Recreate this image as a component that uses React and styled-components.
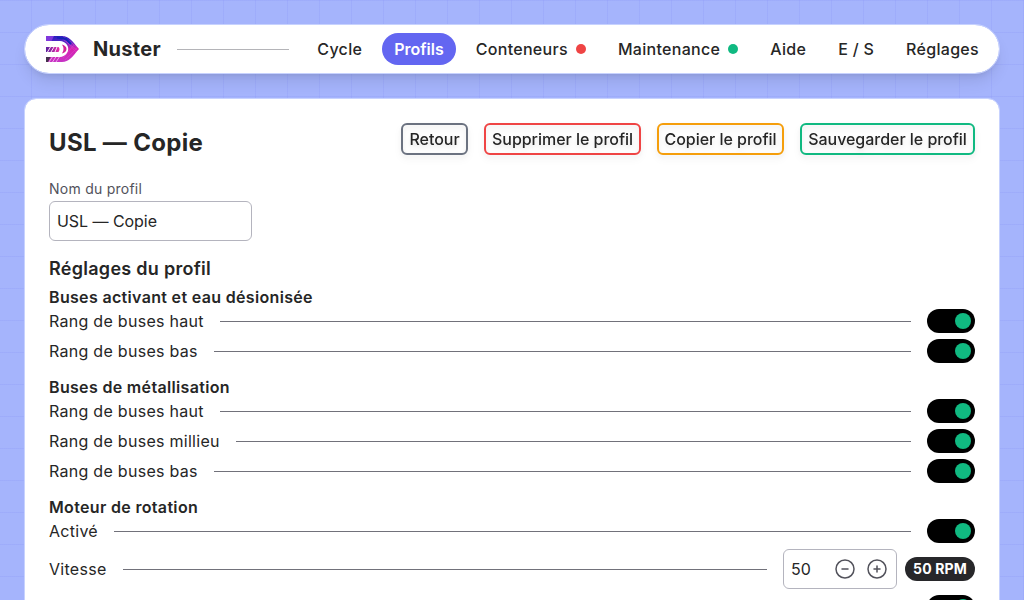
import React from "react";
import styled, { createGlobalStyle } from "styled-components";

const Global = createGlobalStyle`
  *, *::before, *::after { box-sizing: border-box; }
  body { margin: 0; font-family: Inter, "Liberation Sans", sans-serif; color: #262626; font-size: 16px; line-height: 24px; }
  h1, h2, h3, p { margin: 0; }
  button, input { font: inherit; color: inherit; letter-spacing: inherit; }
`;

const Page = styled.div`
  height: 600px;
  overflow: hidden;
  padding: 24px;
  display: flex;
  flex-direction: column;
  gap: 24px;
  background-color: #a5b4fc;
  background-image:
    linear-gradient(to right, transparent 31px, rgba(99, 102, 241, 0.1) 31px),
    linear-gradient(to bottom, rgba(99, 102, 241, 0.1) 1px, transparent 1px);
  background-size: 32px 32px;
`;

const Header = styled.header`
  flex: none;
  height: 50px;
  display: flex;
  align-items: center;
  padding: 0 8px 0 21px;
  background: #fff;
  background-clip: padding-box;
  border: 1px solid #c7d2fe;
  border-radius: 25px;
  box-shadow: 0 10px 15px -3px rgba(0, 0, 0, 0.1), 0 4px 6px -4px rgba(0, 0, 0, 0.1);
`;

const Brand = styled.span`
  margin-left: 13px;
  font-size: 20px;
  line-height: 28px;
  font-weight: 700;
  letter-spacing: 0.3px;
`;

const HeaderRule = styled.div`
  flex: 1;
  height: 1px;
  margin: 0 16px;
  background: #b4b4b8;
`;

const Nav = styled.nav`
  display: flex;
  gap: 8px;
`;

const NavItem = styled.a`
  display: flex;
  align-items: center;
  gap: 8px;
  height: 32px;
  padding: 0 12px;
  border-radius: 16px;
  font-weight: ${(p) => (p.$active ? 600 : 500)};
  letter-spacing: ${(p) => (p.$active ? "0" : "0.3px")};
  color: ${(p) => (p.$active ? "#fff" : "#262626")};
  background: ${(p) => (p.$active ? "#6366f1" : "transparent")};
`;

const Dot = styled.i`
  width: 10px;
  height: 10px;
  border-radius: 50%;
  background: ${(p) => p.$color};
`;

const Card = styled.main`
  flex: none;
  padding: 24px;
  background: #fff;
  background-clip: padding-box;
  border: 1px solid #c7d2fe;
  border-radius: 12px;
`;

const TitleBar = styled.div`
  display: flex;
  justify-content: space-between;
  align-items: flex-start;
`;

const Title = styled.h1`
  margin-top: 4px;
  font-size: 24px;
  line-height: 32px;
  font-weight: 700;
  letter-spacing: 0.32px;
`;

const Actions = styled.div`
  display: flex;
  gap: 16px;
`;

const Action = styled.button`
  width: ${(p) => p.$width}px;
  height: 32px;
  padding: 0;
  white-space: nowrap;
  border: 2px solid ${(p) => p.$color};
  border-radius: 6px;
  background: transparent;
  font-weight: 500;
  line-height: 24px;
  letter-spacing: -0.03px;
  filter: drop-shadow(0 4px 3px rgba(0, 0, 0, 0.07)) drop-shadow(0 2px 2px rgba(0, 0, 0, 0.06));
`;

const FieldLabel = styled.label`
  display: block;
  margin-top: 20px;
  font-size: 14px;
  line-height: 20px;
  letter-spacing: 0.25px;
  color: #52525b;
`;

const TextInput = styled.input`
  display: block;
  width: 203px;
  height: 40px;
  margin-top: 2px;
  padding: 0 7px;
  border: 1px solid #b4b4be;
  border-radius: 6px;
  background: #fff;
  letter-spacing: -0.05px;
`;

const SectionTitle = styled.h2`
  margin-top: 14px;
  font-size: 18px;
  line-height: 28px;
  font-weight: 600;
  letter-spacing: 0.28px;
`;

const Groups = styled.div`
  margin-top: 2px;
  display: flex;
  flex-direction: column;
  gap: 12px;
`;

const GroupTitle = styled.h3`
  font-size: 16px;
  line-height: 24px;
  font-weight: 600;
  letter-spacing: 0.33px;
`;

const Rows = styled.div`
  display: flex;
  flex-direction: column;
  gap: 6px;
`;

const Row = styled.div`
  display: flex;
  align-items: center;
  gap: 16px;
  min-height: 24px;
`;

const RowLabel = styled.span`
  letter-spacing: 0.28px;
`;

const Rule = styled.div`
  flex: 1;
  height: 1px;
  background: #71717a;
`;

const Toggle = styled.button`
  display: flex;
  justify-content: flex-end;
  width: 48px;
  height: 24px;
  padding: 4px;
  border: 0;
  border-radius: 12px;
  background: #000;
`;

const Knob = styled.span`
  width: 16px;
  height: 16px;
  border-radius: 50%;
  background: #10b981;
`;

const Controls = styled.div`
  display: flex;
  align-items: center;
  gap: 8px;
`;

const Stepper = styled.div`
  display: flex;
  align-items: center;
  width: 114px;
  height: 40px;
  padding: 0 7px;
  border: 1px solid #b4b4be;
  border-radius: 6px;
`;

const StepValue = styled.span`
  flex: 1;
`;

const StepIcons = styled.div`
  display: flex;
  gap: 8px;
`;

const Badge = styled.span`
  width: 70px;
  height: 24px;
  text-align: center;
  border-radius: 12px;
  background: #27272a;
  color: #fff;
  font-size: 14px;
  font-weight: 700;
  letter-spacing: 0.15px;
`;

const Logo = () => (
  <svg width="34" height="27" viewBox="0 0 34 27">
    <defs>
      <linearGradient id="body" x1="0.4" y1="0" x2="0.5" y2="1">
        <stop offset="0" stopColor="#2a1fc0" />
        <stop offset="0.28" stopColor="#6428c8" />
        <stop offset="0.5" stopColor="#d81fae" />
        <stop offset="1" stopColor="#c436c8" />
      </linearGradient>
      <linearGradient id="stub" x1="0" y1="0" x2="1" y2="0">
        <stop offset="0" stopColor="#5a22a0" />
        <stop offset="1" stopColor="#f02aa8" />
      </linearGradient>
      <clipPath id="shape">
        <path d="M0 0H16C23 0 26 5 33 13C26 21 23 26 16 26H0V21H14C25 20 25 6 14 5H0Z" />
      </clipPath>
    </defs>
    <g clipPath="url(#shape)">
      <rect width="34" height="27" fill="url(#body)" />
      <path d="M0 0H8L5 6H0Z" fill="#8038dc" />
      <path d="M0 20H5L2 26H0Z" fill="#45304d" />
      <path d="M3 26L7 20M6.5 26L10.5 20M10 26L14 20" stroke="#f2c4f4" strokeWidth="0.8" />
      <path d="M14 1L31 14M17 0L32 12M20 5L30 16M19 24L31 12M17 22L28 9" stroke="#e24bd2" strokeWidth="0.6" opacity="0.75" />
      <path d="M11 1.5L20 3L25 8" stroke="#1724b8" strokeWidth="2" fill="none" />
    </g>
    <path d="M0 11H12.5Q14.5 13 12.5 16H0Z" fill="url(#stub)" />
    <path d="M1.5 16L4.5 11M5 16L8 11M9 16L11 11" stroke="#fff" strokeWidth="0.9" />
    <path d="M16 8.5Q20.5 10 20.5 13T16 17.5Q19 13 16 8.5Z" fill="#d42298" />
  </svg>
);

const StepIcon = ({ plus }) => (
  <svg width="24" height="24" viewBox="0 0 24 24" fill="none" stroke="#52525b" strokeWidth="1.5" strokeLinecap="round">
    <circle cx="12" cy="12" r="9" />
    <path d={plus ? "M9 12H15M12 9V15" : "M9 12H15"} />
  </svg>
);

const nav = [
  { label: "Cycle" },
  { label: "Profils", active: true },
  { label: "Conteneurs", dot: "#ef4444" },
  { label: "Maintenance", dot: "#10b981" },
  { label: "Aide" },
  { label: "E / S" },
  { label: "Réglages" },
];

const actions = [
  ["Retour", "#6b7280", 67],
  ["Supprimer le profil", "#ef4444", 157],
  ["Copier le profil", "#f59e0b", 127],
  ["Sauvegarder le profil", "#10b981", 175],
];

const groups = [
  ["Buses activant et eau désionisée", ["Rang de buses haut", "Rang de buses bas"]],
  ["Buses de métallisation", ["Rang de buses haut", "Rang de buses millieu", "Rang de buses bas"]],
];

const ToggleRow = ({ label }) => (
  <Row>
    {label && <RowLabel>{label}</RowLabel>}
    <Rule />
    <Toggle><Knob /></Toggle>
  </Row>
);

export default function App() {
  return (
    <Page>
      <Global />
      <Header>
        <Logo />
        <Brand>Nuster</Brand>
        <HeaderRule />
        <Nav>
          {nav.map((n) => (
            <NavItem key={n.label} $active={n.active}>
              {n.label}
              {n.dot && <Dot $color={n.dot} />}
            </NavItem>
          ))}
        </Nav>
      </Header>
      <Card>
        <TitleBar>
          <Title>USL — Copie</Title>
          <Actions>
            {actions.map(([label, color, width]) => (
              <Action key={label} $color={color} $width={width}>{label}</Action>
            ))}
          </Actions>
        </TitleBar>
        <FieldLabel htmlFor="name">Nom du profil</FieldLabel>
        <TextInput id="name" defaultValue="USL — Copie" />
        <SectionTitle>Réglages du profil</SectionTitle>
        <Groups>
          {groups.map(([title, rows]) => (
            <section key={title}>
              <GroupTitle>{title}</GroupTitle>
              <Rows>
                {rows.map((r) => <ToggleRow key={r} label={r} />)}
              </Rows>
            </section>
          ))}
          <section>
            <GroupTitle>Moteur de rotation</GroupTitle>
            <Rows>
              <ToggleRow label="Activé" />
              <Row>
                <RowLabel>Vitesse</RowLabel>
                <Rule />
                <Controls>
                  <Stepper>
                    <StepValue>50</StepValue>
                    <StepIcons>
                      <StepIcon />
                      <StepIcon plus />
                    </StepIcons>
                  </Stepper>
                  <Badge>50 RPM</Badge>
                </Controls>
              </Row>
              <ToggleRow />
            </Rows>
          </section>
        </Groups>
      </Card>
    </Page>
  );
}
